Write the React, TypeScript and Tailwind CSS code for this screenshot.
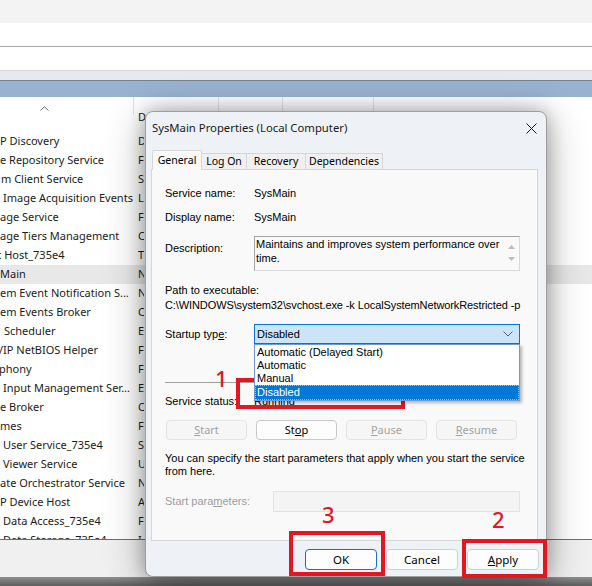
import React from "react";

const UI = "font-['Noto_Sans','Segoe_UI',sans-serif]";
const SS = "font-['Liberation_Sans',Arial,sans-serif]";

// visible part of the Name column (list is scrolled sideways), left offset, first letter of Description
const services: [string, number, string][] = [
  ["P Discovery", 0, "D"],
  ["e Repository Service", 0, "F"],
  ["m Client Service", 1, "S"],
  ["Image Acquisition Events", 3, "L"],
  ["age Service", 0, "F"],
  ["age Tiers Management", 0, "C"],
  ["c Host_735e4", -4, "T"],
  ["Main", 0, "N"],
  ["em Event Notification S...", 0, "N"],
  ["em Events Broker", 0, "C"],
  ["Scheduler", 4, "E"],
  ["/IP NetBIOS Helper", -1, "F"],
  ["phony", -1, "F"],
  ["Input Management Ser...", 3, "E"],
  ["e Broker", 0, "C"],
  ["mes", 0, "F"],
  ["User Service_735e4", 3, "S"],
  ["Viewer Service", 3, "U"],
  ["ate Orchestrator Service", 0, "N"],
  ["P Device Host", 0, "A"],
  ["Data Access_735e4", 3, "F"],
  ["Data Storage_735e4", 3, "I"],
];

function PanelButton({
  children,
  disabled,
}: {
  children: React.ReactNode;
  disabled?: boolean;
}) {
  return (
    <div
      className={`flex h-[20px] w-[81px] items-center justify-center rounded-[4px] border text-[11px] ${UI} ${
        disabled
          ? "border-[#e3e3e3] bg-[#f6f6f6] text-[#a3a3a3]"
          : "border-[#c9c9c9] bg-[#fdfdfd] text-black"
      }`}
    >
      {children}
    </div>
  );
}

function DialogButton({
  children,
  focus,
}: {
  children: React.ReactNode;
  focus?: boolean;
}) {
  return (
    <div
      className={`flex h-[21px] w-[72px] items-center justify-center rounded-[4px] border bg-[#fdfdfd] text-[11.5px] text-black ${UI} ${
        focus ? "border-[#1f6cc2]" : "border-[#cfcfcf]"
      }`}
    >
      {children}
    </div>
  );
}

export default function App() {
  return (
    <div className={`relative h-[586px] w-[592px] overflow-hidden bg-white ${UI}`}>
      {/* console chrome above the list */}
      <div className="h-[23px] bg-[#f3f3f3]" />
      <div className="h-[24px] border-b border-[#a8a8a8] bg-white" />
      <div className="h-[24px] border-b border-[#d8d8d8] bg-white" />
      <div className="h-[10px] border-b border-[#76828e] bg-[#e6eaef]" />
      <div className="h-[16px] bg-[#98b3cf]" />

      {/* services list */}
      <div className="h-[442px] overflow-hidden text-[11px] text-[#1b1b1b]">
        <div className="flex h-[35px]">
          <div className="flex w-[134px]">
            <div className="flex-1 pl-[40px] pt-[9px]">
              <svg width="9" height="5" viewBox="0 0 9 5" className="block">
                <path d="M0.5 4.5 L4.5 0.8 L8.5 4.5" fill="none" stroke="#6b6b6b" strokeWidth="1" />
              </svg>
            </div>
            <div className="h-[18px] w-px bg-[#e2e2e2]" />
          </div>
          <div className="flex w-[85px]">
            <div className="flex-1 pl-[4px] pt-[13px] leading-[14px]">D</div>
            <div className="h-[18px] w-px bg-[#e2e2e2]" />
          </div>
          <div className="flex w-[64px]">
            <div className="flex-1" />
            <div className="h-[18px] w-px bg-[#e2e2e2]" />
          </div>
          <div className="flex w-[91px]">
            <div className="flex-1" />
            <div className="h-[18px] w-px bg-[#e2e2e2]" />
          </div>
        </div>
        {services.map(([name, off, d], i) => (
          <div
            key={i}
            className={`flex h-[19px] items-center ${i === 7 ? "bg-[#e8e8e8]" : ""}`}
          >
            <div className="w-[134px] overflow-hidden whitespace-nowrap">
              <span className="block" style={{ marginLeft: off }}>
                {name}
              </span>
            </div>
            <div className="ml-[4px] w-[6px] overflow-hidden">{d}</div>
          </div>
        ))}
      </div>
      <div className="h-[38px] border-t border-[#6f6f6f] bg-[#f0f0f0]" />
      <div className="h-[9px] bg-gradient-to-b from-[#8f8f8f] to-[#5c5c5c]" />

      {/* SysMain Properties dialog */}
      <div className="absolute left-[145px] top-[111px] flex h-[466px] w-[402px] flex-col rounded-[8px] border border-[#9e9e9e] bg-[#eef1f6] shadow-[0_8px_40px_rgba(0,0,0,0.32),0_0_18px_rgba(0,0,0,0.26)]">
        <div className="flex h-[32px] items-center pl-[6px] pr-[9px] text-[11.3px] text-[#1a1a1a]">
          <span className="flex-1">SysMain Properties (Local Computer)</span>
          <svg width="11" height="11" viewBox="0 0 11 11">
            <path d="M0.5 0.5 L10.5 10.5 M10.5 0.5 L0.5 10.5" stroke="#1a1a1a" strokeWidth="1" />
          </svg>
        </div>

        <div className="mt-[6px] flex h-[20px] items-end pl-[6px] text-[10.5px] text-black">
          <div className="relative z-10 flex h-[20px] w-[50px] items-center justify-center rounded-t-[2px] border border-b-0 border-[#d6d6d6] bg-[#f9f9f9]">
            General
          </div>
          <div className="mb-px flex h-[16px] w-[45px] items-center justify-center border-t border-r border-[#d6d6d6] bg-[#f0f0f0]">
            Log On
          </div>
          <div className="mb-px flex h-[16px] w-[59px] items-center justify-center border-t border-r border-[#d6d6d6] bg-[#f0f0f0]">
            Recovery
          </div>
          <div className="mb-px flex h-[16px] w-[77px] items-center justify-center border-t border-r border-[#d6d6d6] bg-[#f0f0f0]">
            Dependencies
          </div>
        </div>

        <div className="relative -mt-px ml-[5px] h-[372px] w-[387px] border border-[#d6d6d6] bg-[#f9f9f9]">
          <div className={`flex flex-col pl-[13px] pr-[17px] pt-[15px] text-[11px] text-black ${SS}`}>
            <div className="flex h-[16px] items-center">
              <span className="w-[89px]">Service name:</span>
              <span>SysMain</span>
            </div>
            <div className="mt-[8px] flex h-[16px] items-center">
              <span className="w-[89px]">Display name:</span>
              <span>SysMain</span>
            </div>
            <div className="mt-[11px] flex">
              <span className="w-[89px] pt-[4px]">Description:</span>
              <div className="flex h-[35px] w-[266px] border border-[#a3a3a3] border-r-[#dadada] border-b-[#dadada] bg-[#f9f9f9]">
                <div className="flex-1 pl-px leading-[14px]">
                  Maintains and improves system performance over
                  <br />
                  time.
                </div>
                <div className="flex w-[15px] flex-col items-center gap-[8px] pt-[8px]">
                  <svg width="7" height="4" viewBox="0 0 7 4">
                    <path d="M0 4 L3.5 0 L7 4 Z" fill="#bdbdbd" />
                  </svg>
                  <svg width="7" height="4" viewBox="0 0 7 4">
                    <path d="M0 0 L3.5 4 L7 0 Z" fill="#bdbdbd" />
                  </svg>
                </div>
              </div>
            </div>
            <div className="mt-[12px] leading-[15px]">Path to executable:</div>
            <div className="whitespace-nowrap leading-[15px] tracking-[-0.1px]">
              C:\WINDOWS\system32\svchost.exe -k LocalSystemNetworkRestricted -p
            </div>
            <div className="mt-[11px] flex h-[20px] items-center">
              <span className="w-[89px]">
                Startup typ<u>e</u>:
              </span>
              <div className="relative h-[20px] w-[266px]">
                <div className="flex h-full items-center border border-[#0078d7] bg-[#cce4f7] pl-[2px] pr-[6px]">
                  <span className="flex-1">Disabled</span>
                  <svg width="10" height="6" viewBox="0 0 10 6">
                    <path d="M0.5 0.5 L5 5 L9.5 0.5" fill="none" stroke="#5f5f5f" strokeWidth="1" />
                  </svg>
                </div>
                <div className="absolute left-0 top-full z-20 flex w-full flex-col border border-[#6f9bd3] bg-white pt-px leading-[13px] shadow-[2px_2px_3px_rgba(0,0,0,0.28)]">
                  <span className="pl-[2px]">Automatic (Delayed Start)</span>
                  <span className="pl-[2px]">Automatic</span>
                  <span className="pl-[2px]">Manual</span>
                  <span className="border border-dotted border-[#9cc8f0] bg-[#0078d7] pl-px text-white">
                    Disabled
                  </span>
                </div>
              </div>
            </div>
            <div className="mt-[38px] h-px bg-[#a0a0a0]" />
            <div className="mt-[10px] flex h-[16px] items-center">
              <span className="w-[89px]">Service status:</span>
              <span>Running</span>
            </div>
            <div className="ml-px mt-[11px] flex gap-[9px]">
              <PanelButton disabled>
                <u>S</u>tart
              </PanelButton>
              <PanelButton>
                St<u>o</u>p
              </PanelButton>
              <PanelButton disabled>
                <u>P</u>ause
              </PanelButton>
              <PanelButton disabled>
                <u>R</u>esume
              </PanelButton>
            </div>
            <div className="mt-[12px] whitespace-nowrap leading-[13px]">
              You can specify the start parameters that apply when you start the service
              <br />
              from here.
            </div>
            <div className="mt-[13px] flex h-[21px] items-center">
              <span className="w-[108px] text-[#9d9d9d]">
                Start para<u>m</u>eters:
              </span>
              <div className="h-[21px] w-[247px] border border-[#e2e2e2] bg-[#f4f4f4]" />
            </div>
          </div>
        </div>

        <div className="mt-[8px] flex justify-end gap-[9px] pr-[7px]">
          <DialogButton focus>OK</DialogButton>
          <DialogButton>Cancel</DialogButton>
          <DialogButton>
            <u>A</u>pply
          </DialogButton>
        </div>
      </div>

      {/* red step annotations */}
      <div className="absolute left-[215px] top-[367px] text-[22px] font-medium leading-[22px] text-[#e2171f]">1</div>
      <div className="absolute left-[236px] top-[378px] h-[31px] w-[169px] border-4 border-[#e2171f]" />
      <div className="absolute left-[322px] top-[503px] text-[22px] font-medium leading-[22px] text-[#e2171f]">3</div>
      <div className="absolute left-[289px] top-[531px] h-[45px] w-[96px] border-4 border-[#e2171f]" />
      <div className="absolute left-[492px] top-[508px] text-[22px] font-medium leading-[22px] text-[#e2171f]">2</div>
      <div className="absolute left-[462px] top-[539px] h-[39px] w-[85px] border-4 border-[#e2171f]" />
    </div>
  );
}
